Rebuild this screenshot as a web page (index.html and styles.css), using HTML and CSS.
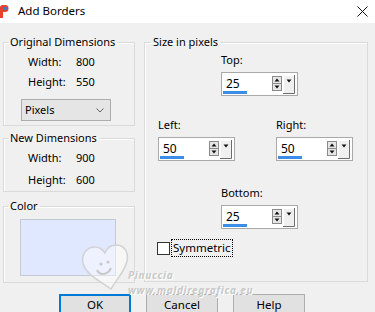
FILE: index.html
```html
<!DOCTYPE html>
<html>
<head>
    <meta charset="utf-8">
    <title>Add Borders</title>
<link rel="stylesheet" href="styles.css">
</head>
<body>
    <div class="window">

        <div class="titlebar">
            <svg class="appicon" width="10" height="16" viewBox="0 0 10 16">
                <path d="M1 15V4.5C1 3 2 2 3.5 2H6.5C8.5 2 9.5 3.5 9.5 5.5S8.5 9 6.5 9H4V15Z" fill="#e8412f"/>
                <circle cx="6" cy="5.5" r="1.8" fill="#2f7fd8"/>
            </svg>
            <span class="title">Add Borders</span>
            <svg class="close" width="11" height="11" viewBox="0 0 11 11">
                <path d="M0.5 0.5L10.5 10.5M10.5 0.5L0.5 10.5" stroke="#111" stroke-width="1"/>
            </svg>
        </div>

        <div class="content">
            <div class="leftcol">
                <fieldset class="group orig">
                    <legend>Original Dimensions</legend>
                    <div class="dims">
                        <span>Width:</span><span>800</span>
                        <span>Height:</span><span>550</span>
                    </div>
                    <div class="combo">
                        <span>Pixels</span>
                        <svg width="8" height="5" viewBox="0 0 8 5"><path d="M0.5 0.5L4 4L7.5 0.5" fill="none" stroke="#666"/></svg>
                    </div>
                </fieldset>

                <fieldset class="group newdims">
                    <legend>New Dimensions</legend>
                    <div class="dims wide">
                        <span>Width:</span><span>900</span>
                        <span>Height:</span><span>600</span>
                    </div>
                </fieldset>

                <fieldset class="group color">
                    <legend>Color</legend>
                    <div class="swatch"></div>
                </fieldset>
            </div>

            <fieldset class="group size">
                <legend>Size in pixels</legend>

                <div class="row center">
                    <div class="field">
                        <label>Top:</label>
                        <div class="spin">
                            <span class="val">25</span>
                            <span class="bar"></span>
                            <svg class="ctrl" width="24" height="20" viewBox="0 0 24 20">
                                <rect x="0.5" y="2.5" width="9" height="14" fill="#e6e6e6" stroke="#8a8a8a"/>
                                <path d="M1 9.5H9" stroke="#8a8a8a"/>
                                <path d="M2.5 7.5L5 4.5L7.5 7.5Z" fill="#111"/>
                                <path d="M2.5 11.5L5 14.5L7.5 11.5Z" fill="#111"/>
                                <rect x="11" y="1" width="11" height="18" fill="#f0f0f0"/>
                                <path d="M11.5 19V1.5H22" fill="none" stroke="#fff"/>
                                <path d="M11 19.5H22.5V1" fill="none" stroke="#6d6d6d"/>
                                <path d="M14.5 5.5H19.5L17 8.5Z" fill="#111"/>
                            </svg>
                        </div>
                    </div>
                </div>

                <div class="row split">
                    <div class="field">
                        <label>Left:</label>
                        <div class="spin">
                            <span class="val">50</span>
                            <span class="bar"></span>
                            <svg class="ctrl" width="24" height="20" viewBox="0 0 24 20">
                                <rect x="0.5" y="2.5" width="9" height="14" fill="#e6e6e6" stroke="#8a8a8a"/>
                                <path d="M1 9.5H9" stroke="#8a8a8a"/>
                                <path d="M2.5 7.5L5 4.5L7.5 7.5Z" fill="#111"/>
                                <path d="M2.5 11.5L5 14.5L7.5 11.5Z" fill="#111"/>
                                <rect x="11" y="1" width="11" height="18" fill="#f0f0f0"/>
                                <path d="M11.5 19V1.5H22" fill="none" stroke="#fff"/>
                                <path d="M11 19.5H22.5V1" fill="none" stroke="#6d6d6d"/>
                                <path d="M14.5 5.5H19.5L17 8.5Z" fill="#111"/>
                            </svg>
                        </div>
                    </div>
                    <div class="field">
                        <label>Right:</label>
                        <div class="spin">
                            <span class="val">50</span>
                            <span class="bar"></span>
                            <svg class="ctrl" width="24" height="20" viewBox="0 0 24 20">
                                <rect x="0.5" y="2.5" width="9" height="14" fill="#e6e6e6" stroke="#8a8a8a"/>
                                <path d="M1 9.5H9" stroke="#8a8a8a"/>
                                <path d="M2.5 7.5L5 4.5L7.5 7.5Z" fill="#111"/>
                                <path d="M2.5 11.5L5 14.5L7.5 11.5Z" fill="#111"/>
                                <rect x="11" y="1" width="11" height="18" fill="#f0f0f0"/>
                                <path d="M11.5 19V1.5H22" fill="none" stroke="#fff"/>
                                <path d="M11 19.5H22.5V1" fill="none" stroke="#6d6d6d"/>
                                <path d="M14.5 5.5H19.5L17 8.5Z" fill="#111"/>
                            </svg>
                        </div>
                    </div>
                </div>

                <div class="row center">
                    <div class="field">
                        <label>Bottom:</label>
                        <div class="spin">
                            <span class="val">25</span>
                            <span class="bar"></span>
                            <svg class="ctrl" width="24" height="20" viewBox="0 0 24 20">
                                <rect x="0.5" y="2.5" width="9" height="14" fill="#e6e6e6" stroke="#8a8a8a"/>
                                <path d="M1 9.5H9" stroke="#8a8a8a"/>
                                <path d="M2.5 7.5L5 4.5L7.5 7.5Z" fill="#111"/>
                                <path d="M2.5 11.5L5 14.5L7.5 11.5Z" fill="#111"/>
                                <rect x="11" y="1" width="11" height="18" fill="#f0f0f0"/>
                                <path d="M11.5 19V1.5H22" fill="none" stroke="#fff"/>
                                <path d="M11 19.5H22.5V1" fill="none" stroke="#6d6d6d"/>
                                <path d="M14.5 5.5H19.5L17 8.5Z" fill="#111"/>
                            </svg>
                        </div>
                    </div>
                </div>

                <div class="check">
                    <span class="box"></span>
                    <span class="focus">Symmetric</span>
                </div>
            </fieldset>
        </div>

        <div class="buttons">
            <button class="default">OK</button>
            <button>Cancel</button>
            <button>Help</button>
        </div>

        <!-- watermark stamped over the screenshot -->
        <div class="watermark">
            <svg class="heart" width="50" height="48" viewBox="0 0 50 48">
                <path d="M31 46C20 38 6 32 3 20C1 11 7 4 15 4C20 4 23 7 25 10C27 5 31 2 36 2C44 2 49 9 47 18C45 28 38 34 31 46Z" fill="#fff" fill-opacity="0.45" stroke="#d2d2d2" stroke-width="1.5"/>
                <circle cx="21" cy="21" r="1.6" fill="#c8c8c8"/>
                <circle cx="28" cy="19" r="1.6" fill="#c8c8c8"/>
                <path d="M17 27C20 33 28 32 31 25" fill="none" stroke="#c8c8c8" stroke-width="2"/>
            </svg>
            <span class="wm1">Pinuccia</span>
            <span class="wm2">www.maldiregrafica.eu</span>
        </div>
    </div>
</body>
</html>
```

FILE: styles.css
```css
body,html{
    margin: 0;
    padding: 0;
}
body{
    background-color: #f0f0f0;
    font-family: "Segoe UI", "Noto Sans", "Open Sans", sans-serif;
    font-size: 11px;
    line-height: 16px;
    color: #000;
}
.window{
    width: 375px;
    height: 312px;
    overflow: hidden;
    position: relative;
}
.titlebar{
    height: 23px;
    background-color: #fff;
    display: flex;
    align-items: center;
}
.appicon{
    margin-left: -1px;
    margin-top: -2px;
}
.title{
    margin-left: 9px;
    margin-top: -1px;
    font-size: 11.5px;
}
.close{
    margin-left: auto;
    margin-right: 7px;
    margin-top: -1px;
}
.content{
    display: flex;
    padding: 11px 0 0 3px;
}
.leftcol{
    width: 132px;
    margin-right: 9px;
}
.group{
    margin: 0;
    padding: 0;
    min-width: 0;
    box-sizing: border-box;
    border: 1px solid #dadada;
    box-shadow: inset 1px 1px 0 #fff;
}
.group legend{
    margin-left: 4px;
    padding: 0 2px;
}
.orig{
    height: 92px;
}
.newdims{
    height: 62px;
    margin-top: 4px;
}
.color{
    height: 85px;
    margin-top: 6px;
}
.dims{
    display: grid;
    grid-template-columns: 48px auto;
    row-gap: 4px;
    padding-left: 24px;
    margin-top: 4px;
}
.dims.wide{
    row-gap: 6px;
}
.combo{
    margin: 9px 0 0 17px;
    width: 90px;
    height: 22px;
    box-sizing: border-box;
    border: 1px solid #adadad;
    background-color: #e5e5e5;
    display: flex;
    align-items: center;
    justify-content: space-between;
    padding: 0 6px 0 3px;
}
.swatch{
    margin: 5px 0 0 16px;
    width: 96px;
    height: 57px;
    box-sizing: border-box;
    background-color: #dfe8fe;
    border: 1px solid #c3cad6;
}
.size{
    width: 224px;
    height: 248px;
}
.size legend{
    margin-left: 6px;
}
.row{
    display: flex;
}
.row.center{
    padding-left: 76px;
    margin-top: 2px;
}
.row.split{
    padding-left: 13px;
    gap: 41px;
    margin-top: 21px;
}
.row.center + .row.split + .row.center{
    margin-top: 24px;
}
.field label{
    display: block;
    margin-bottom: 4px;
}
.spin{
    position: relative;
    width: 77px;
    height: 24px;
    box-sizing: border-box;
    border: 1px solid #a9a9a9;
    background-color: #fff;
}
.spin .val{
    position: absolute;
    left: 4px;
    top: 3px;
    font-size: 12px;
}
.spin .bar{
    position: absolute;
    left: 1px;
    bottom: 1px;
    width: 24px;
    height: 3px;
    background-color: #3b8de6;
}
.spin .ctrl{
    position: absolute;
    right: 1px;
    top: 1px;
}
.check{
    display: flex;
    align-items: center;
    margin: 10px 0 0 12px;
}
.check .box{
    width: 13px;
    height: 13px;
    box-sizing: border-box;
    border: 1px solid #333;
    background-color: #fff;
}
.check .focus{
    margin-left: 1px;
    padding: 0 1px;
    border: 1px dotted #000;
    font-size: 11.5px;
}
.buttons{
    display: flex;
    gap: 15px;
    padding-left: 59px;
    margin-top: 11px;
}
button{
    width: 72px;
    height: 23px;
    font-family: inherit;
    font-size: 11.5px;
    line-height: 12px;
    color: #000;
    background-color: #e1e1e1;
    border: 1px solid #adadad;
    padding: 0 0 2px;
}
button.default{
    border: 2px solid #0078d7;
}
.watermark{
    position: absolute;
    left: 80px;
    top: 243px;
    width: 190px;
    height: 50px;
    pointer-events: none;
}
.heart{
    position: absolute;
    left: 0;
    top: 0;
}
.wm1,.wm2{
    position: absolute;
    left: 48px;
    font-weight: bold;
    font-style: italic;
    color: #c8c8c8;
    text-shadow: 1px 1px 0 #fff;
    font-size: 10px;
    line-height: 14px;
    letter-spacing: 0.7px;
}
.wm1{
    top: 25px;
}
.wm2{
    top: 40px;
}
```
